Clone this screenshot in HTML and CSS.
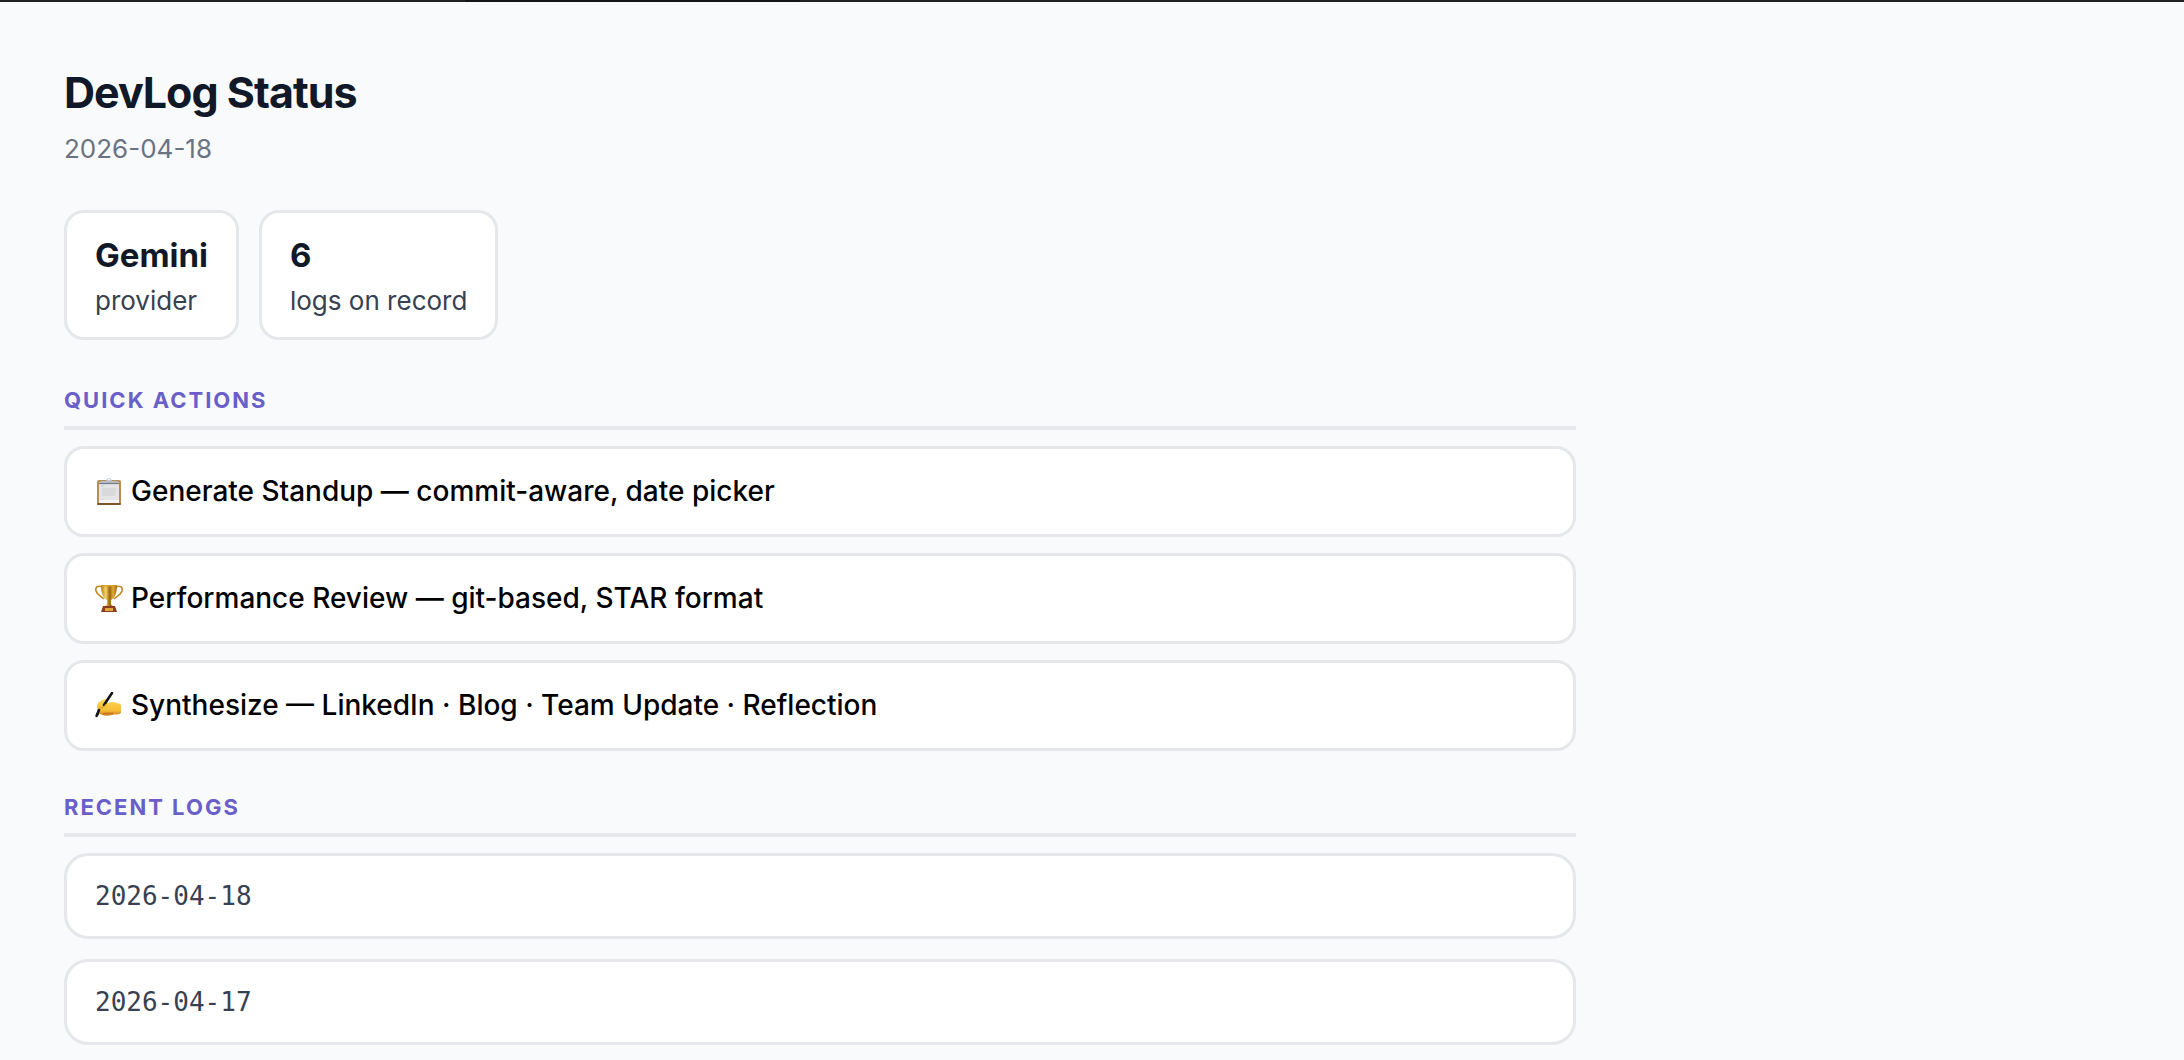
FILE: index.html
```
<!DOCTYPE html>
<html lang="en">
  <head>
    <meta charset="UTF-8" />
    <meta name="viewport" content="width=device-width, initial-scale=1.0" />
    <title>DevLog Status</title>
    <link rel="stylesheet" href="styles.css">
  </head>
  <body>
    <div class="tabstrip"></div>
    <main class="page">
      <h1>DevLog Status</h1>
      <p class="date">2026-04-18</p>

      <div class="stats">
        <div class="stat">
          <div class="value">Gemini</div>
          <div class="label">provider</div>
        </div>
        <div class="stat">
          <div class="value">6</div>
          <div class="label">logs on record</div>
        </div>
      </div>

      <h2>Quick Actions</h2>
      <div class="actions">
        <button type="button" class="action">
          <!-- clipboard -->
          <svg class="icon" viewBox="0 0 28 28" aria-hidden="true">
            <rect x="2" y="2" width="24" height="25" rx="2" fill="#b98d50" />
            <rect x="2" y="25" width="24" height="2" rx="1" fill="#7d5528" />
            <rect x="4" y="4" width="20" height="21" fill="#e4e4e6" />
            <path d="M6 8h3M7 11h14M7 13h14M7 15h14M7 17h13M6 22h3" stroke="#cfcfd2" stroke-width="1" />
            <rect x="4" y="22" width="20" height="3" fill="#f4f4f5" />
            <path d="M6 3h5a3 2 0 0 1 6 0h5l2 2H4z" fill="#b8bdc5" />
            <path d="M4 5.500h20" stroke="#777b82" stroke-width="1.200" />
            <circle cx="14" cy="1.500" r="1.400" fill="#fff" stroke="#b3c0cf" stroke-width="0.800" />
          </svg>
          Generate Standup — commit-aware, date picker
        </button>
        <button type="button" class="action">
          <!-- trophy -->
          <svg class="icon" viewBox="0 0 28 28" aria-hidden="true">
            <defs>
              <linearGradient id="gold">
                <stop offset="0" stop-color="#b77a17" />
                <stop offset="0.3" stop-color="#f6d565" />
                <stop offset="0.55" stop-color="#9a6410" />
                <stop offset="0.75" stop-color="#e2ac35" />
                <stop offset="1" stop-color="#a56b12" />
              </linearGradient>
            </defs>
            <path d="M7 2C3 0 0 2 1 6c1 4 5 5 8 8M21 2c4-2 7 0 6 4-1 4-5 5-8 8" fill="none" stroke="#c48a22" stroke-width="1.6" />
            <path d="M6 0h16c0 8-2 13-6 15v4l3 3H9l3-3v-4C8 13 6 8 6 0z" fill="url(#gold)" />
            <ellipse cx="14" cy="0.8" rx="8" ry="0.8" fill="#d79e2d" />
            <path d="M8 21h12l2 6H6z" fill="#8c3f20" />
            <rect x="10" y="23" width="8" height="3" fill="#e0a93a" />
          </svg>
          Performance Review — git-based, STAR format
        </button>
        <button type="button" class="action">
          <!-- writing hand -->
          <svg class="icon" viewBox="0 0 28 28" aria-hidden="true">
            <defs>
              <linearGradient id="skin" x2="0" y2="1">
                <stop offset="0" stop-color="#ffd84f" />
                <stop offset="0.7" stop-color="#f7bb35" />
                <stop offset="1" stop-color="#c9781c" />
              </linearGradient>
            </defs>
            <path d="M1.500 24 5 17" stroke="#151515" stroke-width="2.4" stroke-linecap="round" />
            <path d="M2 13c1-3 6-6 9-6 2 0 2 2 1 4l5-1c5 1 7 1 9 3v8c-2 2-6 1-9 2-5 1-8 1-12-1-3-2-3-5-3-9z" fill="url(#skin)" />
            <path d="M8 22c4-2 7 0 10-1" fill="none" stroke="#b86a1b" stroke-width="1" />
            <path d="M2 23 4 18M9 13 17 1" stroke="#151515" stroke-width="2.6" stroke-linecap="round" />
            <path d="M4 16c3 0 5-1 7-4" fill="none" stroke="#d8942a" stroke-width="1" />
          </svg>
          Synthesize — LinkedIn · Blog · Team Update · Reflection
        </button>
      </div>

      <h2>Recent Logs</h2>
      <div class="logs">
        <div class="log">2026-04-18</div>
        <div class="log">2026-04-17</div>
      </div>
    </main>
  </body>
</html>
```
FILE: styles.css
```
* {
  margin: 0;
  padding: 0;
  box-sizing: border-box;
}
body {
  background-color: #f9fafc;
  font-family: Inter, "Liberation Sans", sans-serif;
  color: #111827;
}
.tabstrip {
  height: 2px;
  background: linear-gradient(to right, #222224 465px, #161618 465px, #161618 800px, #222224 800px);
}
.page {
  max-width: 1640px;
  padding: 62px 64px 0;
}
h1 {
  font-size: 43px;
  line-height: 56px;
  font-weight: 700;
  letter-spacing: -1px;
}
.date {
  margin-top: 13px;
  font-size: 26px;
  line-height: 32px;
  color: #6b7280;
}
.stats {
  display: flex;
  gap: 20px;
  margin: 45px 0 44px;
}
.stat {
  padding: 20px 28px;
  background-color: #fff;
  border: 3px solid #e5e7eb;
  border-radius: 20px;
}
.value {
  font-size: 33px;
  line-height: 44px;
  font-weight: 700;
}
.label {
  margin-top: 8px;
  font-size: 26px;
  line-height: 32px;
  color: #374151;
}
h2 {
  margin: 40px 0 16px;
  padding-bottom: 10px;
  border-bottom: 4px solid #e5e7eb;
  font-size: 22px;
  line-height: 32px;
  font-weight: 700;
  letter-spacing: 2px;
  text-transform: uppercase;
  color: #6a5fc9;
}
.actions {
  display: flex;
  flex-direction: column;
  gap: 16px;
}
.action {
  display: flex;
  align-items: center;
  gap: 8px;
  width: 100%;
  padding: 26px 28px;
  background-color: #fff;
  border: 3px solid #e5e7eb;
  border-radius: 20px;
  font-family: inherit;
  font-size: 28px;
  line-height: 33px;
  font-weight: 500;
  text-align: left;
  color: #000;
  cursor: pointer;
}
.icon {
  flex: none;
  width: 28px;
  height: 28px;
}
.logs {
  display: flex;
  flex-direction: column;
  gap: 20px;
}
.log {
  padding: 24px 28px;
  background-color: #fff;
  border: 3px solid #e5e7eb;
  border-radius: 24px;
  font-family: "DejaVu Sans Mono", "Liberation Mono", monospace;
  font-size: 26px;
  line-height: 32px;
  color: #374151;
}
```
